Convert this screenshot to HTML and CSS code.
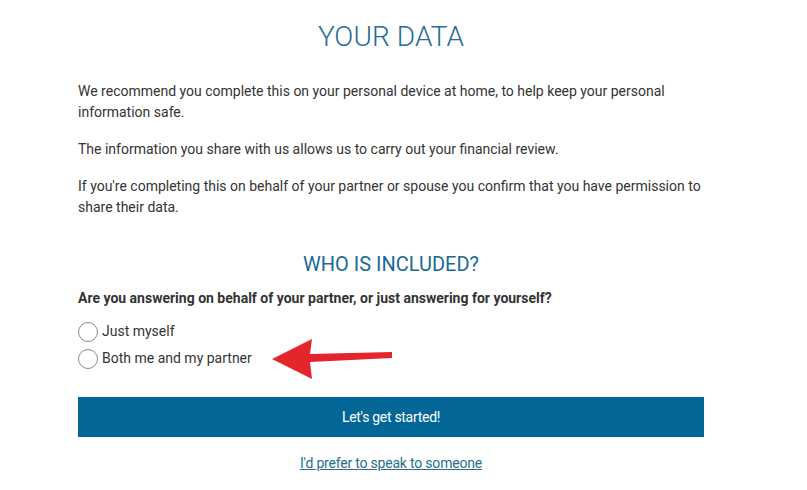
FILE: index.html
```html
<!DOCTYPE html>
<html>
<head>
<meta charset="utf-8">
<link rel="stylesheet" href="styles.css">
</head>
<body>
<main class="page">
  <h1 class="title">YOUR DATA</h1>
  <p class="para">We recommend you complete this on your personal device at home, to help keep your personal information safe.</p>
  <p class="para">The information you share with us allows us to carry out your financial review.</p>
  <p class="para">If you're completing this on behalf of your partner or spouse you confirm that you have permission to share their data.</p>
  <h2 class="subtitle">WHO IS INCLUDED?</h2>
  <p class="question">Are you answering on behalf of your partner, or just answering for yourself?</p>
  <div class="options">
    <label class="option"><span class="radio"></span>Just myself</label>
    <label class="option"><span class="radio"></span>Both me and my partner
      <svg class="arrow" width="130" height="44" viewBox="0 0 130 44"><polygon points="2,22 42,2 40,17 122,15 122,21 40,25 42,42" fill="#e3262b"/></svg>
    </label>
  </div>
  <button class="cta">Let's get started!</button>
  <div class="linkrow"><a class="link" href="#">I'd prefer to speak to someone</a></div>
</main>
</body>
</html>
```
FILE: styles.css
```css
html, body { margin: 0; padding: 0; background: #fff; }
body { font-family: Roboto, "Liberation Sans", sans-serif; color: #333; }
.page { width: 626px; margin-left: 78px; padding-top: 20px; }
.title { margin: 0 0 27px; text-align: center; font-weight: 300; font-size: 28px; line-height: 34px; color: #246d94; letter-spacing: 0.1px; }
.para { margin: 0 0 16px; font-size: 14px; line-height: 21px; }
.subtitle { margin: 34px 0 12px; text-align: center; font-weight: 400; font-size: 20px; line-height: 24px; color: #1a6a96; }
.question { margin: 0 0 12px; font-size: 14px; line-height: 21px; font-weight: 700; }
.options { display: flex; flex-direction: column; gap: 6px; }
.option { position: relative; display: flex; align-items: center; gap: 4px; font-size: 14px; line-height: 21px; height: 21px; width: max-content; }
.radio { width: 18px; height: 18px; border: 1px solid #888; border-radius: 50%; box-sizing: content-box; background: #fff; }
.arrow { position: absolute; left: 192px; top: -11px; }
.cta { display: block; width: 626px; height: 40px; margin-top: 28px; border: 0; background: #026796; color: #fff; font-family: Roboto, sans-serif; font-size: 14px; letter-spacing: -0.3px; }
.linkrow { text-align: center; margin-top: 16px; }
.link { color: #286d8f; font-size: 14px; letter-spacing: -0.2px; }
```
